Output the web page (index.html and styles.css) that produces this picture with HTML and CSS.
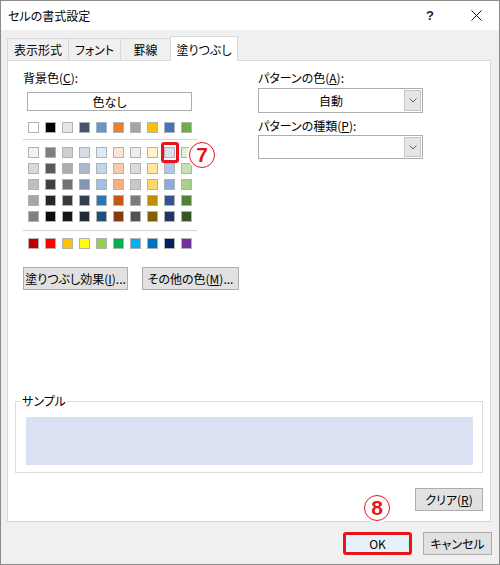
FILE: index.html
```html
<!DOCTYPE html>
<html lang="ja">
<head>
    <meta charset="UTF-8">
    <title>セルの書式設定</title>
    <link rel="stylesheet" href="styles.css">
</head>
<body>
    <div class="dialog">
        <div class="titlebar">
            <span class="title">セルの書式設定</span>
            <span class="caption-btn help">?</span>
            <span class="caption-btn">
                <svg width="11" height="11" viewBox="0 0 11 11"><path d="M0.5 0.5L10.5 10.5M10.5 0.5L0.5 10.5" stroke="#111" stroke-width="1" fill="none"/></svg>
            </span>
        </div>

        <div class="client">
            <div class="tabs">
                <div class="tab tab-number">表示形式</div>
                <div class="tab tab-font">フォント</div>
                <div class="tab tab-border">罫線</div>
                <div class="tab tab-fill tab-active">塗りつぶし</div>
            </div>

            <div class="panel">
                <div class="columns">
                    <div class="col-left">
                        <div class="field-label">背景色(<u>C</u>):</div>
                        <div class="no-color">色なし</div>

                        <div class="swatches swatches-top">
                            <span class="swatch" style="background:#ffffff"></span>
                            <span class="swatch" style="background:#000000"></span>
                            <span class="swatch" style="background:#e7e6e6"></span>
                            <span class="swatch" style="background:#44546a"></span>
                            <span class="swatch" style="background:#5b9bd5"></span>
                            <span class="swatch" style="background:#ed7d31"></span>
                            <span class="swatch" style="background:#a5a5a5"></span>
                            <span class="swatch" style="background:#ffc000"></span>
                            <span class="swatch" style="background:#4472c4"></span>
                            <span class="swatch" style="background:#70ad47"></span>
                        </div>
                        <div class="sep sep-top"></div>

                        <div class="swatches">
                            <span class="swatch" style="background:#f2f2f2"></span>
                            <span class="swatch" style="background:#7f7f7f"></span>
                            <span class="swatch" style="background:#d0cece"></span>
                            <span class="swatch" style="background:#d6dce4"></span>
                            <span class="swatch" style="background:#ddebf7"></span>
                            <span class="swatch" style="background:#fce4d6"></span>
                            <span class="swatch" style="background:#ededed"></span>
                            <span class="swatch" style="background:#fff2cc"></span>
                            <span class="swatch selected" style="background:#d9e1f2"></span>
                            <span class="swatch" style="background:#e2efda"></span>

                            <span class="swatch" style="background:#d9d9d9"></span>
                            <span class="swatch" style="background:#595959"></span>
                            <span class="swatch" style="background:#aeabab"></span>
                            <span class="swatch" style="background:#acb9ca"></span>
                            <span class="swatch" style="background:#bdd7ee"></span>
                            <span class="swatch" style="background:#f8cbad"></span>
                            <span class="swatch" style="background:#dbdbdb"></span>
                            <span class="swatch" style="background:#ffe699"></span>
                            <span class="swatch" style="background:#b4c6e7"></span>
                            <span class="swatch" style="background:#c6e0b4"></span>

                            <span class="swatch" style="background:#bfbfbf"></span>
                            <span class="swatch" style="background:#404040"></span>
                            <span class="swatch" style="background:#757171"></span>
                            <span class="swatch" style="background:#8497b0"></span>
                            <span class="swatch" style="background:#9bc2e6"></span>
                            <span class="swatch" style="background:#f4b084"></span>
                            <span class="swatch" style="background:#c9c9c9"></span>
                            <span class="swatch" style="background:#ffd966"></span>
                            <span class="swatch" style="background:#8ea9db"></span>
                            <span class="swatch" style="background:#a9d08e"></span>

                            <span class="swatch" style="background:#a6a6a6"></span>
                            <span class="swatch" style="background:#262626"></span>
                            <span class="swatch" style="background:#3a3838"></span>
                            <span class="swatch" style="background:#333f4f"></span>
                            <span class="swatch" style="background:#2f75b5"></span>
                            <span class="swatch" style="background:#c65911"></span>
                            <span class="swatch" style="background:#7b7b7b"></span>
                            <span class="swatch" style="background:#bf8f00"></span>
                            <span class="swatch" style="background:#305496"></span>
                            <span class="swatch" style="background:#548235"></span>

                            <span class="swatch" style="background:#808080"></span>
                            <span class="swatch" style="background:#0d0d0d"></span>
                            <span class="swatch" style="background:#171616"></span>
                            <span class="swatch" style="background:#222a35"></span>
                            <span class="swatch" style="background:#1f4e78"></span>
                            <span class="swatch" style="background:#833c0c"></span>
                            <span class="swatch" style="background:#525252"></span>
                            <span class="swatch" style="background:#806000"></span>
                            <span class="swatch" style="background:#203764"></span>
                            <span class="swatch" style="background:#375623"></span>
                        </div>
                        <div class="sep sep-bottom"></div>

                        <div class="swatches">
                            <span class="swatch" style="background:#c00000"></span>
                            <span class="swatch" style="background:#ff0000"></span>
                            <span class="swatch" style="background:#ffc000"></span>
                            <span class="swatch" style="background:#ffff00"></span>
                            <span class="swatch" style="background:#92d050"></span>
                            <span class="swatch" style="background:#00b050"></span>
                            <span class="swatch" style="background:#00b0f0"></span>
                            <span class="swatch" style="background:#0070c0"></span>
                            <span class="swatch" style="background:#002060"></span>
                            <span class="swatch" style="background:#7030a0"></span>
                        </div>

                        <div class="btn-row">
                            <button class="btn btn-effect">塗りつぶし効果(<u>I</u>)...</button>
                            <button class="btn btn-more">その他の色(<u>M</u>)...</button>
                        </div>
                    </div>

                    <div class="col-right">
                        <div class="field-label">パターンの色(<u>A</u>):</div>
                        <div class="select select-color">
                            <span class="select-value">自動</span>
                            <span class="select-arrow">
                                <svg width="8" height="5" viewBox="0 0 8 5"><path d="M0.5 0.5L4 4L7.5 0.5" stroke="#606060" fill="none"/></svg>
                            </span>
                        </div>
                        <div class="field-label label-pattern">パターンの種類(<u>P</u>):</div>
                        <div class="select select-pattern">
                            <span class="select-value"></span>
                            <span class="select-arrow">
                                <svg width="8" height="5" viewBox="0 0 8 5"><path d="M0.5 0.5L4 4L7.5 0.5" stroke="#606060" fill="none"/></svg>
                            </span>
                        </div>
                    </div>
                </div>

                <div class="sample">
                    <div class="sample-title">サンプル</div>
                    <div class="sample-fill"></div>
                </div>

                <div class="clear-row">
                    <button class="btn btn-clear">クリア(<u>R</u>)</button>
                </div>
            </div>
        </div>

        <div class="footer">
            <button class="btn btn-ok">OK</button>
            <button class="btn btn-cancel">キャンセル</button>
        </div>

        <!-- annotation markers -->
        <div class="marker marker-7">7</div>
        <div class="marker marker-8">8</div>
    </div>
</body>
</html>
```

FILE: styles.css
```css
* {
    margin: 0;
    padding: 0;
    box-sizing: border-box;
}

body {
    font-family: "Noto Sans CJK JP", "Noto Sans", sans-serif;
    font-size: 12px;
    font-feature-settings: "palt";
    color: #000;
    background: #fff;
}

u {
    text-decoration-thickness: 1px;
    text-underline-offset: 1px;
}

.dialog {
    position: relative;
    width: 500px;
    height: 565px;
    border: 1px solid #8c8c8c;
    background: #f0f0f0;
    display: flex;
    flex-direction: column;
}

.titlebar {
    height: 29px;
    background: #fff;
    display: flex;
    align-items: center;
}

.title {
    flex: 1;
    padding-left: 7px;
    font-size: 12px;
}

.caption-btn {
    width: 46px;
    height: 29px;
    display: flex;
    align-items: center;
    justify-content: center;
}

.help {
    font-family: "Liberation Sans", sans-serif;
    font-size: 13px;
    font-weight: bold;
    color: #222;
}

.client {
    padding: 6px 8px 0 6px;
}

.tabs {
    display: flex;
    align-items: flex-end;
    height: 24px;
}

.tab {
    height: 22px;
    margin-left: -1px;
    border: 1px solid #d9d9d9;
    border-bottom: none;
    background: #f0f0f0;
    display: flex;
    align-items: center;
    justify-content: center;
}

.tab:first-child {
    margin-left: 0;
}

.tab-number { width: 62px; }
.tab-font { width: 53px; }
.tab-border { width: 51px; }
.tab-fill { width: 68px; }

.tab-active {
    height: 25px;
    margin-bottom: -1px;
    background: #fff;
    position: relative;
    z-index: 1;
}

.panel {
    background: #fff;
    border: 1px solid #d9d9d9;
}

.columns {
    display: flex;
}

.col-left {
    width: 250px;
    padding-left: 15px;
}

.col-right {
    width: 165px;
}

.field-label {
    height: 16px;
    line-height: 16px;
    margin-top: 9px;
}

.no-color {
    width: 165px;
    height: 19px;
    margin: 6px 0 0 4px;
    border: 1px solid #adadad;
    background: #fff;
    text-align: center;
    line-height: 17px;
}

.swatches {
    display: grid;
    grid-template-columns: repeat(10, 11px);
    grid-auto-rows: 11px;
    column-gap: 6px;
    row-gap: 5px;
    margin-left: 5px;
}

.swatches-top {
    margin-top: 11px;
}

.swatch {
    position: relative;
    border: 1px solid #b2b2b2;
}

.swatch.selected::after {
    content: "";
    position: absolute;
    top: -6px;
    right: -5px;
    bottom: -6px;
    left: -4px;
    border: 3px solid #e8141b;
    border-radius: 3px;
}

.sep {
    width: 174px;
    border-top: 1px solid #d5d5d5;
}

.sep-top {
    margin: 6px 0 7px;
}

.sep-bottom {
    margin: 8px 0 7px;
}

.btn-row {
    display: flex;
    gap: 14px;
    margin-top: 18px;
}

.btn {
    height: 23px;
    border: 1px solid #adadad;
    background: #e1e1e1;
    font-family: inherit;
    font-size: 12px;
    font-feature-settings: "palt";
    color: #000;
    display: flex;
    align-items: center;
    justify-content: center;
}

.btn-effect { width: 105px; }
.btn-more { width: 97px; }

.select {
    display: flex;
    height: 25px;
    border: 1px solid #adadad;
    background: #fff;
}

.select-color {
    margin-top: 2px;
}

.label-pattern {
    margin-top: 5px;
}

.select-pattern {
    height: 24px;
    margin-top: 1px;
}

.select-value {
    flex: 1;
    text-align: center;
    line-height: 23px;
}

.select-arrow {
    width: 17px;
    margin: 1px;
    background: #e5e5e5;
    border: 1px solid #c4c4c4;
    display: flex;
    align-items: center;
    justify-content: center;
}

.sample {
    margin: 111px 7px 0;
    border: 1px solid #dcdcdc;
    padding: 0 9px 7px 10px;
    line-height: 16px;
}

.sample-title {
    width: max-content;
    margin: -9px 0 0 -5px;
    padding: 0 1px;
    background: #fff;
}

.sample-fill {
    height: 48px;
    margin-top: 8px;
    background: #d9e1f2;
}

.clear-row {
    display: flex;
    justify-content: flex-end;
    margin: 15px 7px 10px 0;
}

.btn-clear { width: 68px; }

.footer {
    display: flex;
    justify-content: flex-end;
    gap: 11px;
    padding: 10px 7px 9px 0;
}

.btn-ok,
.btn-cancel {
    width: 69px;
}

.btn-ok {
    background: #e5f1fb;
    border: 3px solid #e8141b;
    border-radius: 3px;
}

.marker {
    position: absolute;
    width: 26px;
    height: 26px;
    border: 1.5px solid #e8141b;
    border-radius: 50%;
    background: #fff;
    box-shadow: 0 0 0 2px rgba(255, 255, 255, 0.85);
    color: #e8141b;
    font-family: "Liberation Sans", sans-serif;
    font-size: 21px;
    font-weight: bold;
    line-height: 23px;
    text-align: center;
}

.marker-7 {
    left: 188px;
    top: 141px;
}

.marker-8 {
    left: 363px;
    top: 494px;
}
```
